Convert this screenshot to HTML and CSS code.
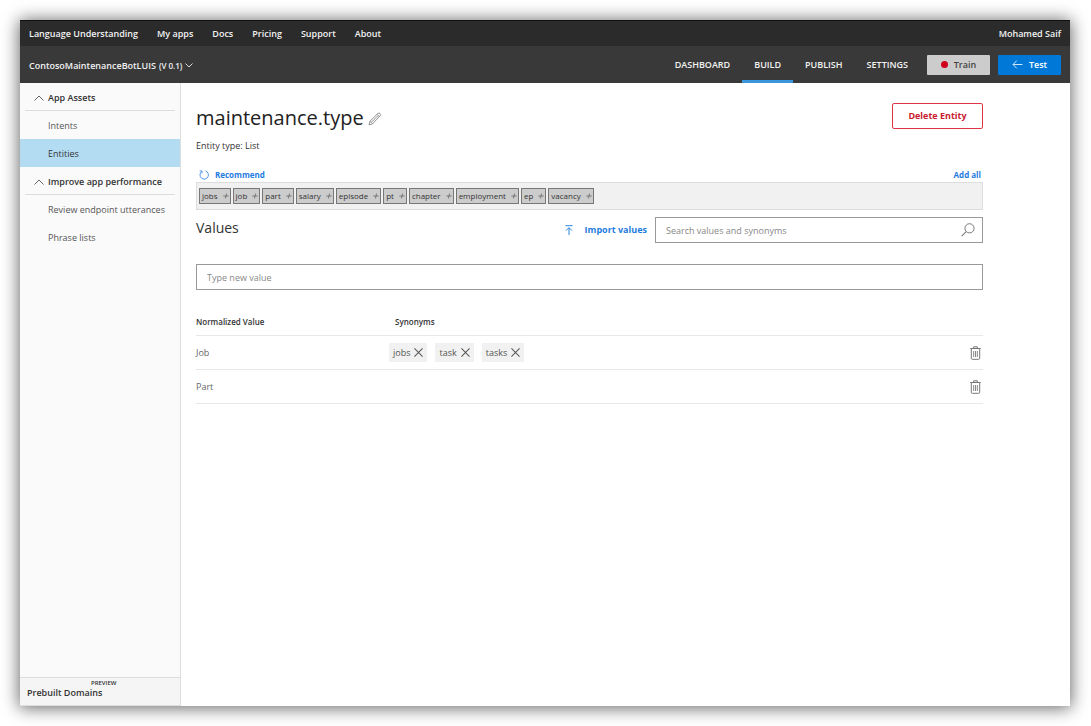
FILE: index.html
```html
<!DOCTYPE html>
<html lang="en">
<head>
<meta charset="utf-8">
<title>Language Understanding</title>
<link rel="stylesheet" href="styles.css">
</head>
<body>
<div class="window">
  <header class="topbar">
    <nav class="topnav" aria-label="Site">
      <a href="#">Language Understanding</a>
      <a href="#">My apps</a>
      <a href="#">Docs</a>
      <a href="#">Pricing</a>
      <a href="#">Support</a>
      <a href="#">About</a>
    </nav>
    <a class="user" href="#">Mohamed Saif</a>
  </header>
  <div class="appbar">
    <button class="app-name" type="button">ContosoMaintenanceBotLUIS <span class="version">(V 0.1)</span>
      <svg width="8" height="5" viewBox="0 0 8 5"><path d="M.5.5 4 4 7.5.5" fill="none" stroke="#ddd"/></svg>
    </button>
    <nav class="tabs" aria-label="App">
      <a href="#">DASHBOARD</a>
      <a class="active" href="#">BUILD</a>
      <a href="#">PUBLISH</a>
      <a href="#">SETTINGS</a>
    </nav>
    <button class="btn train" type="button"><span class="dot"></span>Train</button>
    <button class="btn test" type="button"><svg width="11" height="9" viewBox="0 0 11 9"><path d="M10.5 4.5H1M4.8.6 1 4.5l3.8 3.9" fill="none" stroke="#cfe6fa"/></svg>Test</button>
  </div>
  <div class="body">
    <aside class="sidebar">
      <button class="group" type="button"><svg width="10" height="6" viewBox="0 0 10 6"><path d="M.5 5.5 5 1l4.500 4.500" fill="none" stroke="#666"/></svg>App Assets</button>
      <a class="item" href="#">Intents</a>
      <a class="item selected" href="#">Entities</a>
      <button class="group" type="button"><svg width="10" height="6" viewBox="0 0 10 6"><path d="M.5 5.5 5 1l4.500 4.500" fill="none" stroke="#666"/></svg>Improve app performance</button>
      <a class="item" href="#">Review endpoint utterances</a>
      <a class="item" href="#">Phrase lists</a>
      <a class="prebuilt" href="#"><span class="preview">PREVIEW</span><span>Prebuilt Domains</span></a>
    </aside>
    <main class="main">
      <div class="heading">
        <h1>maintenance.type</h1>
        <button class="icon-btn" type="button" aria-label="Rename"><svg width="14" height="14" viewBox="0 0 14 14"><path d="M1 13l1-3.800L10 1.300q1-.7 2 .2t.3 2L4.600 11.800zM2 9.300l2.500 2.500M9 2.300l2.500 2.500M3.300 10.400l6.700-6.800" fill="none" stroke="#888" stroke-width=".9"/></svg></button>
        <button class="delete" type="button">Delete Entity</button>
      </div>
      <p class="kind">Entity type: List</p>
      <div class="rec-head">
        <button class="link" type="button"><svg width="10" height="10" viewBox="0 0 10 10"><path d="M6.500.9A4.200 4.200 0 1 1 2.600 1.600M.7.9h2.300v2.300" fill="none" stroke="#3d8fe6" stroke-width=".9"/></svg>Recommend</button>
        <button class="link" type="button">Add all</button>
      </div>
      <div class="suggestions">
        <button type="button">jobs<svg class="plus"><use href="#plus"/></svg></button>
        <button type="button">job<svg class="plus"><use href="#plus"/></svg></button>
        <button type="button">part<svg class="plus"><use href="#plus"/></svg></button>
        <button type="button">salary<svg class="plus"><use href="#plus"/></svg></button>
        <button type="button">episode<svg class="plus"><use href="#plus"/></svg></button>
        <button type="button">pt<svg class="plus"><use href="#plus"/></svg></button>
        <button type="button">chapter<svg class="plus"><use href="#plus"/></svg></button>
        <button type="button">employment<svg class="plus"><use href="#plus"/></svg></button>
        <button type="button">ep<svg class="plus"><use href="#plus"/></svg></button>
        <button type="button">vacancy<svg class="plus"><use href="#plus"/></svg></button>
      </div>
      <div class="values-bar">
        <h2>Values</h2>
        <button class="link import" type="button"><svg width="8" height="10" viewBox="0 0 8 10"><path d="M.5.7h7M4 10V3M1 5.600l3-3 3 3" fill="none" stroke="#2b84e0"/></svg>Import values</button>
        <label class="search">
          <input class="field" type="search" placeholder="Search values and synonyms" aria-label="Search values and synonyms">
          <svg width="14" height="14" viewBox="0 0 14 14"><circle cx="8.500" cy="5.300" r="4.600" fill="none" stroke="#777"/><path d="M5.200 8.700.7 13.200" stroke="#777" stroke-width="1.100"/></svg>
        </label>
      </div>
      <input class="field new-value" type="text" placeholder="Type new value" aria-label="Type new value">
      <table class="values">
        <thead><tr><th>Normalized Value</th><th class="syn">Synonyms</th><th class="act"></th></tr></thead>
        <tbody>
          <tr>
            <td>Job</td>
            <td><div class="chips">
              <button type="button">jobs<svg class="x"><use href="#x"/></svg></button>
              <button type="button">task<svg class="x"><use href="#x"/></svg></button>
              <button type="button">tasks<svg class="x"><use href="#x"/></svg></button>
            </div></td>
            <td class="act"><button class="icon-btn" type="button" aria-label="Delete Job"><svg class="bin"><use href="#bin"/></svg></button></td>
          </tr>
          <tr>
            <td>Part</td>
            <td></td>
            <td class="act"><button class="icon-btn" type="button" aria-label="Delete Part"><svg class="bin"><use href="#bin"/></svg></button></td>
          </tr>
        </tbody>
      </table>
    </main>
  </div>
</div>
<svg class="defs" aria-hidden="true">
  <symbol id="plus" viewBox="0 0 6 6"><path d="M.3 3h5.400M3.600.5 2.400 5.500" stroke="#666" stroke-width=".8"/></symbol>
  <symbol id="x" viewBox="0 0 8 8"><path d="M.4.4l7.200 7.200M7.600.4.4 7.600" stroke="#555" stroke-width=".9"/></symbol>
  <symbol id="bin" viewBox="0 0 11 14"><path d="M.3 2.500h10.400M3.700 2.300V.8h3.600v1.500M1.300 2.700v9.600q0 1 1 1h6.400q1 0 1-1V2.700" fill="none" stroke="#777"/><path d="M3.700 5v6M5.500 5v6M7.300 5v6" stroke="#888"/></symbol>
</svg>
</body>
</html>
```

FILE: styles.css
```css
* { box-sizing: border-box; }

body {
  margin: 0;
  padding: 20px 21px 20px 20px;
  min-height: 100vh;
  display: flex;
  background: #fff;
  color: #333;
  font: 9px/14px "Open Sans", "Noto Sans", sans-serif;
}

a { color: inherit; text-decoration: none; }

button {
  margin: 0;
  padding: 0;
  border: 0;
  background: none;
  color: inherit;
  font: inherit;
  cursor: pointer;
}

svg { flex: none; display: block; }
.defs { position: absolute; width: 0; height: 0; }

.window {
  flex: 1;
  display: flex;
  flex-direction: column;
  min-width: 0;
  background: #fff;
  box-shadow: 0 1px 16px 1px rgba(0, 0, 0, .6);
}

.topbar {
  display: flex;
  justify-content: space-between;
  align-items: center;
  height: 26px;
  padding: 1px 9px 0;
  border-top: 1px solid #111;
  background: #2b2b2b;
  color: #f2f2f2;
  font-weight: 600;
}
.topnav { display: flex; gap: 19px; }

.appbar {
  display: flex;
  align-items: center;
  height: 37px;
  padding: 0 9px;
  background: #393939;
  color: #f2f2f2;
  font-weight: 600;
}
.app-name { display: flex; align-items: center; gap: 3px; padding-top: 2px; }
.version { font-size: 8px; }

.tabs {
  display: flex;
  align-self: stretch;
  margin-left: auto;
  margin-right: 7px;
}
.tabs a {
  display: flex;
  align-items: center;
  padding: 4px 12px 0;
  border-bottom: 3px solid transparent;
}
.tabs .active { border-color: #3a96dd; }

.btn {
  display: flex;
  align-items: center;
  justify-content: center;
  gap: 6px;
  width: 63px;
  height: 20px;
  border-radius: 1px;
}
.train { background: #ccc; color: #444; }
.dot { width: 7px; height: 7px; border-radius: 50%; background: #d0021b; }
.test { margin-left: 8px; background: #0078d7; color: #fff; }

.body { flex: 1; display: flex; }

.sidebar {
  flex: none;
  display: flex;
  flex-direction: column;
  width: 161px;
  border-right: 1px solid #ddd;
  background: #fafafa;
  white-space: nowrap;
}
.group {
  display: flex;
  align-items: center;
  gap: 4px;
  height: 28px;
  margin: 0 5px;
  padding: 2px 9px 0;
  border-bottom: 1px solid #ddd;
  font-weight: 600;
}
.item {
  display: flex;
  align-items: center;
  height: 28px;
  padding: 1px 8px 0 28px;
  color: #555;
}
.selected { background: #b3dcf3; color: #333; }
.prebuilt {
  display: flex;
  flex-direction: column;
  height: 29px;
  margin-top: auto;
  padding: 2px 7px;
  border-top: 1px solid #ddd;
  border-bottom: 1px solid #ddd;
  background: #f5f5f5;
  font-weight: 600;
  line-height: 12px;
}
.preview { padding-left: 64px; font-size: 6px; line-height: 7px; }

.main {
  flex: 1;
  min-width: 0;
  padding: 20px 87px 20px 15px;
}
.heading { display: flex; align-items: flex-start; gap: 4px; min-height: 30px; }
h1 { margin: 0; font-size: 20px; line-height: 30px; font-weight: 400; color: #222; }
.heading .icon-btn { padding-top: 9px; }
.delete {
  width: 91px;
  height: 26px;
  margin-left: auto;
  border: 1px solid #dc3545;
  border-radius: 2px;
  color: #c9202f;
  font-weight: 700;
}
.kind { margin: 5px 0 14px; line-height: 16px; }

.rec-head { display: flex; justify-content: space-between; padding: 0 2px 0 3px; font-size: 8px; }
.link { display: flex; align-items: center; gap: 6px; color: #1f7ce0; font-weight: 700; }

.suggestions {
  display: flex;
  flex-wrap: wrap;
  gap: 2px;
  padding: 5px 2px;
  border: 1px solid #ddd;
  background: #f1f1f1;
}
.suggestions button {
  display: flex;
  align-items: center;
  gap: 5px;
  height: 16px;
  padding: 0 1px 0 2px;
  border: 1px solid #777;
  background: #ccc;
  font-size: 8px;
}
.plus { width: 6px; height: 6px; }

.values-bar { display: flex; margin: 7px 0 21px; }
h2 { margin: 0; font-size: 14px; line-height: 22px; font-weight: 400; }
.import { gap: 12px; margin-left: auto; margin-right: 8px; }
.search { position: relative; flex: 0 1 328px; }
.search svg { position: absolute; right: 8px; top: 6px; }

.field {
  display: block;
  width: 100%;
  height: 26px;
  padding: 0 10px;
  border: 1px solid #999;
  border-radius: 0;
  outline: 0;
  background: #fff;
  color: #333;
  font: inherit;
  appearance: none;
}
.field::placeholder { color: #888; opacity: 1; }

.values { width: 100%; margin-top: 18px; border-collapse: collapse; table-layout: fixed; }
.values th, .values td { height: 34px; padding: 1px 0 0; border-bottom: 1px solid #e8e8e8; text-align: left; }
.values th { width: 193px; height: 27px; font-size: 8px; font-weight: 600; }
.values .syn { width: auto; padding-left: 6px; }
.values td { color: #666; }
.values .act { width: 20px; }
.act .icon-btn { display: block; margin-left: auto; padding: 0 2px; }
.bin { width: 11px; height: 14px; }

.chips { display: flex; gap: 8px; }
.chips button {
  display: flex;
  align-items: center;
  gap: 4px;
  height: 19px;
  padding: 0 4px;
  background: #f1f1f1;
  color: #555;
}
.x { width: 9px; height: 9px; }
```
